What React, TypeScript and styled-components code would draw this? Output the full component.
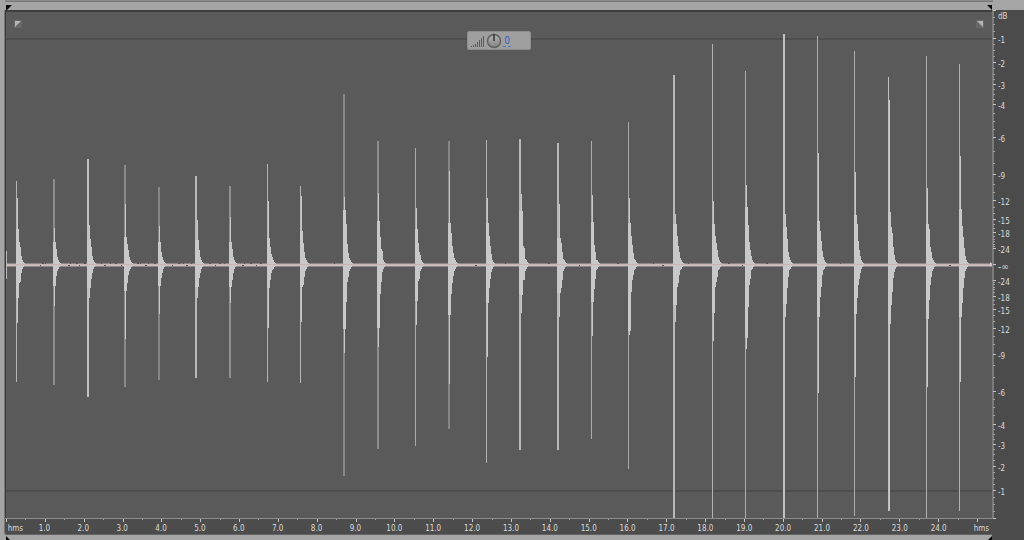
import React from "react";
import styled, { createGlobalStyle } from "styled-components";

const GlobalStyle = createGlobalStyle`
  * { box-sizing: border-box; }
  body {
    margin: 0;
    background: #a5a5a5;
    font-family: "DejaVu Sans Condensed", "DejaVu Sans", Tahoma, sans-serif;
    font-size: 8px;
    line-height: 13px;
    color: #dadada;
  }
`;

const Editor = styled.div`
  display: grid;
  grid-template-columns: minmax(0, 1fr) 32px;
  grid-template-rows: 10px minmax(0, 1fr);
  min-height: 100vh;
`;

const RangeBar = styled.header`
  grid-column: 1 / -1;
  display: grid;
  grid-template-columns: minmax(0, 1fr) 31px;
  grid-template-rows: 2px 8px;
  background: #a5a5a5;
`;

const Overview = styled.div`
  margin-left: 5px;
  background: #8b8b8b;
  border-bottom: 1px solid #777777;
`;

const MarkerRow = styled.div<{ $bottom?: boolean }>`
  grid-row: 2;
  display: flex;
  justify-content: space-between;
  padding: ${(p) => (p.$bottom ? "1px 0 0 5px" : "3px 0 0 6px")};
  height: ${(p) => (p.$bottom ? "5px" : "8px")};
`;

const Marker = styled.svg`
  display: block;
  width: 6px;
  height: 5px;
  fill: #080808;
`;

const Track = styled.main`
  display: flex;
  flex-direction: column;
  min-width: 0;
`;

const TrackPanel = styled.section`
  flex: 1;
  display: flex;
  flex-direction: column;
  margin-left: 4px;
  border-left: 1px solid #777777;
  border-bottom: 1px solid #636363;
  border-bottom-left-radius: 3px;
  background: #4c4c4c;
`;

const Plot = styled.div`
  position: relative;
  flex: 1;
  display: flex;
  min-height: 300px;
  border-top: 2px solid #3e3e3e;
  border-left: 1px solid #3a3a3a;
  background: #5a5a5a;
`;

const Wave = styled.svg`
  flex: 1;
  width: 100%;
  min-width: 0;
  display: block;
`;

const FadeButton = styled.button<{ $side: "left" | "right" }>`
  position: absolute;
  top: 8px;
  ${(p) => p.$side}: 8px;
  width: 8px;
  height: 8px;
  padding: 0;
  border: 0;
  background: #686868;
  svg { display: block; }
`;

const Hud = styled.div`
  position: absolute;
  top: 19px;
  left: 50%;
  width: 64px;
  height: 19px;
  margin-left: -32px;
  padding: 0 3px;
  display: flex;
  align-items: center;
  gap: 1px;
  border: 1px solid #8d8d8d;
  border-radius: 2px;
  background: #9f9f9f;
`;

const GainButton = styled.button`
  width: 8px;
  height: 12px;
  padding: 0;
  border: 0;
  border-bottom: 1px dashed #4d76c0;
  background: none;
  color: #2f62c4;
  font: 10px/11px "DejaVu Sans Condensed", "DejaVu Sans", Tahoma, sans-serif;
`;

const TimeRuler = styled.div`
  height: 16px;
  border-top: 1px solid #8c8c8c;
  padding-left: 1px;
`;

const TimeTicks = styled.svg`
  display: block;
  width: 100%;
  height: 3px;
`;

const TimeLabels = styled.div`
  display: grid;
  grid-template-columns: 19fr repeat(24, 39fr) 34fr;
  text-align: center;
`;

const TimeLabel = styled.span<{ $end?: boolean }>`
  white-space: nowrap;
  text-align: ${(p) => (p.$end ? "right" : "center")};
  padding-right: ${(p) => (p.$end ? "3px" : "0")};
`;

const LevelRuler = styled.aside`
  display: grid;
  grid-template-columns: 5px minmax(0, 1fr);
  grid-template-rows: minmax(0, 1fr) 21px;
  background: #4b4b4b;
`;

const LevelTicks = styled.svg`
  width: 5px;
  height: 100%;
  min-height: 0;
  display: block;
`;

const LevelLabels = styled.div<{ $rows: string }>`
  display: grid;
  grid-template-rows: ${(p) => p.$rows};
  padding-left: 1px;
`;

const LevelLabel = styled.span<{ $infinite?: boolean }>`
  height: 0;
  line-height: 0;
  font-size: ${(p) => (p.$infinite ? "10px" : "8px")};
`;

const CENTER = 265;
const HALF = 254;
const BRIGHT = "#c8c8c8";

/* x, line width, line colour, peak y, trough y, upper steps, lower steps */
type Hit = [number, number, string, number, number, number[], number[]];

const hits: Hit[] = [
  [16, 1, "#b4b4b4", 181, 382, [198, 229, 242, 247, 256], [323, 298, 283, 282, 273]],
  [53, 2, "#8c8c8c", 179, 385, [228, 242, 249, 257], [306, 286, 276, 271]],
  [87, 2, "#c0c0c0", 159, 397, [225, 239, 247, 256], [298, 288, 279, 273]],
  [124, 2, "#8a8a8a", 165, 387, [204, 237, 244, 250, 257], [339, 291, 283, 275, 271]],
  [158, 2, "#868686", 187, 380, [226, 242, 252, 257], [314, 286, 278, 273]],
  [195, 2, "#b8b8b8", 176, 378, [220, 240, 250, 257], [298, 287, 278, 273]],
  [229, 2, "#909090", 186, 378, [217, 242, 249, 257], [303, 287, 280, 273]],
  [267, 1, "#b4b4b4", 164, 382, [201, 238, 247, 254, 257], [328, 288, 280, 273, 270]],
  [300, 1, "#b8b8b8", 186, 383, [196, 231, 243, 252, 258], [322, 287, 285, 277, 271]],
  [343, 2, "#878787", 94, 476, [197, 210, 224, 244, 253, 258], [353, 329, 302, 282, 277, 271]],
  [377, 2, "#8c8c8c", 141, 449, [193, 221, 237, 249, 251], [347, 328, 294, 282, 272]],
  [415, 1, "#aaaaaa", 148, 446, [208, 229, 243, 252, 255], [325, 301, 281, 279, 271]],
  [448, 2, "#858585", 141, 429, [171, 223, 233, 246, 253, 258], [384, 315, 294, 283, 276, 271]],
  [486, 1, "#b4b4b4", 140, 463, [198, 223, 236, 246, 254], [357, 303, 288, 279, 272]],
  [519, 2, "#b8b8b8", 139, 450, [194, 211, 246, 248, 259], [313, 295, 280, 280, 271]],
  [557, 2, "#b8b8b8", 143, 450, [204, 238, 243, 252, 259], [317, 293, 288, 280, 271]],
  [591, 1, "#aaaaaa", 141, 439, [195, 222, 245, 252, 260], [336, 302, 289, 279, 270]],
  [628, 1, "#a8a8a8", 122, 469, [198, 223, 236, 245, 253, 259], [335, 331, 292, 280, 275, 270]],
  [673, 2, "#b8b8b8", 75, 519, [214, 224, 236, 246, 252, 258], [322, 305, 287, 283, 275, 270]],
  [712, 1, "#b2b2b2", 44, 519, [201, 224, 236, 243, 250, 257], [341, 313, 287, 282, 277, 270]],
  [745, 1, "#aeaeae", 71, 519, [185, 207, 225, 242, 250, 256], [349, 338, 307, 285, 279, 270]],
  [783, 2, "#c0c0c0", 34, 519, [214, 227, 239, 252, 257], [317, 304, 288, 277, 270]],
  [817, 1, "#adadad", 36, 519, [153, 221, 231, 241, 251, 257], [393, 317, 297, 287, 275, 270]],
  [854, 1, "#adadad", 51, 516, [172, 215, 224, 241, 250, 256], [377, 314, 298, 285, 279, 273]],
  [888, 1, "#c0c0c0", 77, 511, [100, 212, 227, 233, 247, 255], [511, 324, 305, 292, 278, 272]],
  [926, 1, "#b0b0b0", 56, 519, [188, 224, 229, 247, 252, 258], [387, 319, 300, 285, 277, 271]],
  [959, 1, "#b0b0b0", 64, 511, [156, 209, 226, 237, 248, 256], [382, 317, 303, 288, 278, 271]],
];

/* Strong two-column peaks start their decay after the second column. */
const isStrong = (w: number, color: string) => w === 2 && color > "#b0b0b0";

function decayPath([x, w, color, , , up, down]: Hit) {
  const tops = [...up, 260, 262, 263];
  const bottoms = [...down, 269, 267, 266];
  const start = isStrong(w, color) ? x + 2 : x + 1;
  let d = `M${x} ${CENTER}V${tops[1]}H${start}`;
  tops.forEach((y, i) => (d += `V${y}H${start + i + 1}`));
  d += `V${CENTER}`;
  for (let i = bottoms.length - 1; i >= 0; i--) {
    d += `H${start + i + 1}V${bottoms[i]}`;
  }
  return d + `H${start}V${bottoms[1]}H${x}Z`;
}

/* Gaps in the noise floor, denser where the recording is quiet. */
const specks: number[] = [];
for (let x = 40, n = 7; x < 980; ) {
  n = (n * 73 + 19) % 101;
  const hidden = hits.some((h) => x >= h[0] - 2 && x < h[0] + 13);
  if (!hidden) specks.push(x);
  x += x < 270 ? 2 + (n % 5) : 8 + (n % 37);
}

function Waveform() {
  return (
    <Wave viewBox="6 12 986 506" preserveAspectRatio="none" role="img" aria-label="Waveform">
      <path d="M6 39H992M6 491H992" stroke="#4e4e4e" strokeWidth="2" />
      <rect x="6" y="263" width="986" height="4" fill="#8d8585" />
      <rect x="6" y="264" width="986" height="2" fill="#c9c0c0" />
      {specks.map((x, i) => (
        <rect key={x} x={x} y={i % 3 === 0 ? 265 : 263} width={1 + (i % 2)} height="1" fill="#5c5050" />
      ))}
      <rect x="6" y="251" width="1" height="28" fill="#b8b8b8" />
      {hits.map((h) => (
        <g key={h[0]}>
          <rect x={h[0]} y={h[3]} width={h[1]} height={h[4] - h[3]} fill={h[2]} />
          <path d={decayPath(h)} fill={BRIGHT} />
        </g>
      ))}
      <rect x="6" y="264" width="986" height="1" fill="#c9b3b3" />
      <path d="M990 262L993 264.500L990 267Z" fill="#d0c8c8" />
    </Wave>
  );
}

const levels = [1, 2, 3, 4, 6, 9, 12, 15, 18, 24];
const offset = (db: number) => Math.round(HALF * Math.pow(10, -db / 20));

const upper = levels.map((db) => ({ text: `-${db}`, y: CENTER - offset(db) + 2 }));
const lower = [...levels].reverse().map((db) => ({ text: `-${db}`, y: CENTER + offset(db) + 2 }));
const levelMarks = [{ text: "dB", y: 17 }, ...upper, { text: "-∞", y: 267 }, ...lower];
const levelRows = [
  "7fr",
  ...levelMarks.map((m, i) => `${(levelMarks[i + 1]?.y ?? 519) - m.y}fr`),
].join(" ");

const minorLevels = [
  0.25, 0.5, 0.75, 1.25, 1.5, 1.75, 2.25, 2.5, 2.75, 3.25, 3.5, 3.75, 4.5, 5, 5.5, 7, 8, 10, 11,
  13, 14, 16, 17, 19, 20, 21, 22, 23,
];

function LevelAxis() {
  const major = [0, ...levels].flatMap((db) => [CENTER - offset(db), CENTER + offset(db)]);
  const minor = minorLevels.flatMap((db) => [CENTER - offset(db), CENTER + offset(db)]);
  return (
    <LevelRuler aria-label="Level scale">
      <LevelTicks viewBox="0 10 5 509" preserveAspectRatio="none" aria-hidden="true">
        <rect x="0" y="10" width="2" height="509" fill="#7b7b7b" />
        {minor.map((y, i) => (
          <rect key={i} x="1" y={y - 1} width="2" height="1" fill="#a2a2a2" />
        ))}
        {[...major, CENTER].map((y, i) => (
          <rect key={i} x="1" y={y - 1} width="3" height="1" fill="#c4c4c4" />
        ))}
      </LevelTicks>
      <LevelLabels $rows={levelRows}>
        <span />
        {levelMarks.map((m, i) => (
          <LevelLabel key={i} $infinite={m.text === "-∞"}>{m.text}</LevelLabel>
        ))}
      </LevelLabels>
    </LevelRuler>
  );
}

function TimeAxis() {
  const seconds = Array.from({ length: 24 }, (_, i) => i + 1);
  const ticks = Array.from({ length: 51 }, (_, i) => i);
  return (
    <TimeRuler aria-label="Time scale">
      <TimeTicks viewBox="0 0 986 3" preserveAspectRatio="none" aria-hidden="true">
        {ticks.map((t) => (
          <rect
            key={t}
            x={Math.round((t * 38.84) / 2)}
            y="0"
            width="1"
            height={t % 2 ? 1 : 3}
            fill={t % 2 ? "#a0a0a0" : "#c8c8c8"}
          />
        ))}
      </TimeTicks>
      <TimeLabels>
        <TimeLabel>hms</TimeLabel>
        {seconds.map((s) => (
          <TimeLabel key={s}>{s.toFixed(1)}</TimeLabel>
        ))}
        <TimeLabel $end>hms</TimeLabel>
      </TimeLabels>
    </TimeRuler>
  );
}

function VolumeHud() {
  return (
    <Hud>
      <svg width="14" height="12" viewBox="0 0 14 12" fill="#5b5b5b" aria-hidden="true">
        <path d="M0 11h1v1H0zM2 10h1v2H2zM4 9h1v3H4zM6 7h1v5H6zM8 5h1v7H8zM10 3h1v9h-1zM12 1h1v11h-1z" />
      </svg>
      <svg width="16" height="16" viewBox="0 0 16 16" aria-hidden="true">
        <defs>
          <linearGradient id="knob" x1="0" y1="0" x2="0" y2="1">
            <stop offset="0" stopColor="#b4b4b4" />
            <stop offset="1" stopColor="#858585" />
          </linearGradient>
        </defs>
        <circle cx="8" cy="8" r="6.500" fill="url(#knob)" stroke="#606060" strokeWidth="1.500" />
        <path d="M8 1v7" stroke="#303030" strokeWidth="1.500" />
      </svg>
      <GainButton aria-label="Gain in decibels">0</GainButton>
    </Hud>
  );
}

function Fade({ side }: { side: "left" | "right" }) {
  return (
    <FadeButton $side={side} aria-label={side === "left" ? "Fade in" : "Fade out"}>
      <svg width="8" height="8" viewBox="0 0 8 8" aria-hidden="true">
        <path d={side === "left" ? "M1 1H7L1 7Z" : "M1 1H7V7Z"} fill="#b4b4b4" />
      </svg>
    </FadeButton>
  );
}

export default function App() {
  return (
    <>
      <GlobalStyle />
      <Editor>
        <RangeBar>
          <Overview />
          <MarkerRow>
            <Marker viewBox="0 0 6 5"><path d="M0 0H6L1 5H0Z" /></Marker>
            <Marker viewBox="0 0 6 5"><path d="M0 0H5V5Z" /></Marker>
          </MarkerRow>
        </RangeBar>
        <Track>
          <TrackPanel>
            <Plot>
              <Waveform />
              <Fade side="left" />
              <Fade side="right" />
              <VolumeHud />
            </Plot>
            <TimeAxis />
          </TrackPanel>
          <MarkerRow $bottom>
            <Marker viewBox="0 0 6 5"><path d="M1 0L6 5H1Z" /></Marker>
            <Marker viewBox="0 0 6 5"><path d="M6 0V5H1Z" /></Marker>
          </MarkerRow>
        </Track>
        <LevelAxis />
      </Editor>
    </>
  );
}
